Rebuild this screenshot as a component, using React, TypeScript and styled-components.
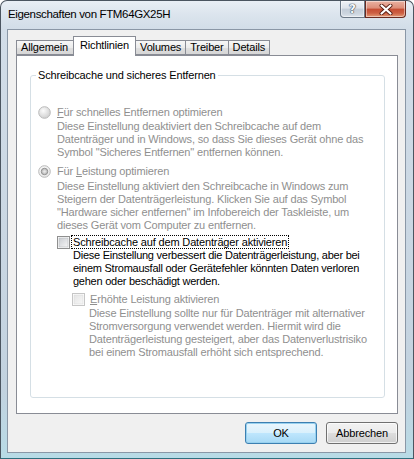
import React from "react";
import styled, { createGlobalStyle } from "styled-components";

const Global = createGlobalStyle`
  html, body { margin: 0; padding: 0; background: #ffffff; }
  body { font-family: "Liberation Sans", Arial, sans-serif; }
  * { box-sizing: border-box; }
`;

const Window = styled.div`
  width: 414px;
  height: 459px;
  display: flex;
  flex-direction: column;
  border: 1px solid #4b5560;
  border-bottom-color: #2f6f7e;
  border-radius: 7px 7px 0 0;
  background: linear-gradient(
    180deg,
    #e9eff5 0px,
    #dbe4ed 14px,
    #d2dde8 28px,
    #cad7e3 50%,
    #c2d2df 85%,
    #b8dbe6 100%
  );
  overflow: hidden;
`;

const TitleBar = styled.div`
  height: 28px;
  flex: none;
  display: flex;
  align-items: flex-start;
`;

const Title = styled.div`
  padding: 6px 0 0 7px;
  font-size: 11.5px;
  line-height: 14px;
  letter-spacing: -0.35px;
  color: #000;
`;

const CaptionButtons = styled.div`
  margin-left: auto;
  margin-right: 7px;
  display: flex;
`;

const CaptionButton = styled.div<{ $kind: "help" | "close" }>`
  height: 17px;
  width: ${(p) => (p.$kind === "help" ? 25 : 41)}px;
  display: flex;
  align-items: center;
  justify-content: center;
  border: 1px solid ${(p) => (p.$kind === "help" ? "#6b7886" : "#6a2a1f")};
  border-top: none;
  border-radius: ${(p) => (p.$kind === "help" ? "0 0 0 4px" : "0 0 4px 0")};
  background: ${(p) =>
    p.$kind === "help"
      ? "linear-gradient(180deg, #f0f3f7 0%, #dde3ea 45%, #c3cdd8 50%, #cdd6df 80%, #dfe6ee 100%)"
      : "linear-gradient(180deg, #eab2a2 0%, #dc8d78 45%, #c54d33 50%, #cc5f42 75%, #e39a76 100%)"};
  box-shadow: inset 0 0 0 1px rgba(255, 255, 255, 0.45);
`;

const HelpGlyph = styled.span`
  font-family: "DejaVu Sans", sans-serif;
  font-weight: bold;
  font-size: 12px;
  line-height: 12px;
  color: #f7f9fb;
  text-shadow: 0 0 1px #3b4754, 0 0 1px #3b4754, 0 0 1px #3b4754;
`;

const Client = styled.div`
  flex: 1;
  margin: 0 7px 5px 6px;
  border: 1px solid #8a97a6;
  background: #f0f0f0;
  display: flex;
  flex-direction: column;
  padding: 6px 7px 0 8px;
  font-size: 11px;
  letter-spacing: -0.15px;
`;

const TabStrip = styled.div`
  display: flex;
  align-items: flex-end;
  height: 19px;
  flex: none;
  position: relative;
  z-index: 1;
`;

const Tab = styled.div<{ $active?: boolean }>`
  height: ${(p) => (p.$active ? 20 : 15)}px;
  margin-bottom: ${(p) => (p.$active ? -1 : 0)}px;
  margin-left: -1px;
  padding: ${(p) => (p.$active ? "2px 6px 0" : "0 4px")};
  border: 1px solid #898c95;
  border-bottom: ${(p) => (p.$active ? "none" : "1px solid #898c95")};
  background: ${(p) =>
    p.$active
      ? "#ffffff"
      : "linear-gradient(180deg, #f7f7f7 0%, #ececec 50%, #e0e0e0 51%, #d6d6d6 100%)"};
  line-height: 13px;
  display: flex;
  align-items: ${(p) => (p.$active ? "flex-start" : "center")};
  color: #000;
  white-space: nowrap;
  z-index: ${(p) => (p.$active ? 2 : 1)};
  &:first-child { margin-left: 0; padding-right: 5px; }
`;

const Panel = styled.div`
  flex: 1;
  border: 1px solid #898c95;
  background: #ffffff;
  display: flex;
  flex-direction: column;
`;

const Group = styled.fieldset`
  flex: 1;
  margin: 13px 12px 15px 13px;
  padding: 0 0 0 7px;
  border: 1px solid #d5dfe5;
  border-radius: 3px;
  min-width: 0;
`;

const Legend = styled.legend`
  margin-left: -2px;
  padding: 0 2px;
  line-height: 13px;
  color: #000;
`;

const OptionRow = styled.div<{ $indent?: number; $gap?: number; $top?: number }>`
  display: flex;
  align-items: center;
  height: 14px;
  margin-left: ${(p) => p.$indent ?? 0}px;
  margin-top: ${(p) => p.$top ?? 0}px;
  gap: ${(p) => p.$gap ?? 4}px;
`;

const OptionLabel = styled.span<{ $disabled?: boolean; $focus?: boolean }>`
  color: ${(p) => (p.$disabled ? "#8f8f8f" : "#000")};
  line-height: 12px;
  padding: 0 1px;
  border: 1px dotted ${(p) => (p.$focus ? "#000" : "transparent")};
  white-space: nowrap;
`;

const Key = styled.span`
  text-decoration: underline;
`;

const Description = styled.div<{ $indent: number; $disabled?: boolean; $top?: number }>`
  margin-left: ${(p) => p.$indent}px;
  margin-top: ${(p) => p.$top ?? 1}px;
  color: ${(p) => (p.$disabled ? "#8f8f8f" : "#000")};
  letter-spacing: ${(p) => (p.$disabled ? "-0.15px" : "-0.25px")};
  line-height: 13px;
  white-space: nowrap;
`;

const ButtonRow = styled.div`
  flex: none;
  display: flex;
  justify-content: flex-end;
  gap: 9px;
  padding: 8px 0 8px;
`;

const PushButton = styled.button<{ $default?: boolean }>`
  width: 72px;
  height: 22px;
  font-family: "Liberation Sans", Arial, sans-serif;
  font-size: 11px;
  letter-spacing: -0.15px;
  color: #000;
  border-radius: 3px;
  border: 1px solid ${(p) => (p.$default ? "#3c7fb1" : "#707070")};
  background: ${(p) =>
    p.$default
      ? "linear-gradient(180deg, #eaf6fd 0%, #d9f0fc 50%, #bee6fd 51%, #a7d9f5 100%)"
      : "linear-gradient(180deg, #f2f2f2 0%, #ebebeb 50%, #dddddd 51%, #cfcfcf 100%)"};
  box-shadow: inset 0 0 0 1px ${(p) => (p.$default ? "#98d1ef" : "rgba(255,255,255,0.7)")};
  padding: 0;
`;

const Radio = ({ checked }: { checked?: boolean }) => (
  <svg width="13" height="13" viewBox="0 0 13 13">
    <defs>
      <radialGradient id={checked ? "rg2" : "rg1"} cx="40%" cy="35%" r="70%">
        <stop offset="0%" stopColor="#fbfbfb" />
        <stop offset="100%" stopColor={checked ? "#e6e6e6" : "#cdcdcd"} />
      </radialGradient>
    </defs>
    <circle cx="6.5" cy="6.5" r="5.8" fill={`url(#${checked ? "rg2" : "rg1"})`} stroke="#b9b9b9" strokeWidth="1" />
    {checked && (
      <>
        <circle cx="6.5" cy="6.5" r="3.2" fill="#c9c9c9" stroke="#8e8e8e" strokeWidth="1" />
        <circle cx="6.5" cy="6.5" r="1.3" fill="#e8e8e8" />
      </>
    )}
  </svg>
);

const Check = ({ disabled }: { disabled?: boolean }) => (
  <svg width="13" height="13" viewBox="0 0 13 13">
    <defs>
      <linearGradient id={disabled ? "cg2" : "cg1"} x1="0" y1="0" x2="1" y2="1">
        <stop offset="0%" stopColor={disabled ? "#e4e4e4" : "#c9ccd1"} />
        <stop offset="100%" stopColor={disabled ? "#f7f7f7" : "#f6f6f6"} />
      </linearGradient>
    </defs>
    <rect x="0.5" y="0.5" width="12" height="12" fill="#ffffff" stroke={disabled ? "#c6c6c6" : "#8f8f8f"} />
    <rect x="2" y="2" width="9" height="9" fill={`url(#${disabled ? "cg2" : "cg1"})`} stroke={disabled ? "#dadada" : "#b5b8bd"} strokeWidth="0.6" />
  </svg>
);

const CloseGlyph = () => (
  <svg width="14" height="11" viewBox="0 0 14 11">
    <path d="M2.5 1.5 L11.5 9.5 M11.5 1.5 L2.5 9.5" stroke="#5a1f14" strokeWidth="4" strokeLinecap="round" />
    <path d="M2.5 1.5 L11.5 9.5 M11.5 1.5 L2.5 9.5" stroke="#ffffff" strokeWidth="2.2" strokeLinecap="round" />
  </svg>
);

export default function App() {
  return (
    <>
      <Global />
      <Window>
        <TitleBar>
          <Title>Eigenschaften von FTM64GX25H</Title>
          <CaptionButtons>
            <CaptionButton $kind="help">
              <HelpGlyph>?</HelpGlyph>
            </CaptionButton>
            <CaptionButton $kind="close">
              <CloseGlyph />
            </CaptionButton>
          </CaptionButtons>
        </TitleBar>
        <Client>
          <TabStrip>
            <Tab>Allgemein</Tab>
            <Tab $active>Richtlinien</Tab>
            <Tab>Volumes</Tab>
            <Tab>Treiber</Tab>
            <Tab>Details</Tab>
          </TabStrip>
          <Panel>
            <Group>
              <Legend>Schreibcache und sicheres Entfernen</Legend>
              <OptionRow $top={23}>
                <Radio />
                <OptionLabel $disabled>
                  <Key>F</Key>ür schnelles Entfernen optimieren
                </OptionLabel>
              </OptionRow>
              <Description $indent={19} $disabled>
                Diese Einstellung deaktiviert den Schreibcache auf dem
                <br />
                Datenträger und in Windows, so dass Sie dieses Gerät ohne das
                <br />
                Symbol "Sicheres Entfernen" entfernen können.
              </Description>
              <OptionRow $top={5}>
                <Radio checked />
                <OptionLabel $disabled>
                  Für <Key>L</Key>eistung optimieren
                </OptionLabel>
              </OptionRow>
              <Description $indent={19} $disabled $top={2}>
                Diese Einstellung aktiviert den Schreibcache in Windows zum
                <br />
                Steigern der Datenträgerleistung. Klicken Sie auf das Symbol
                <br />
                "Hardware sicher entfernen" im Infobereich der Taskleiste, um
                <br />
                dieses Gerät vom Computer zu entfernen.
              </Description>
              <OptionRow $indent={19} $gap={1} $top={3}>
                <Check />
                <OptionLabel $focus>Schreibcache auf dem Datenträger aktivieren</OptionLabel>
              </OptionRow>
              <Description $indent={35} $top={0}>
                Diese Einstellung verbessert die Datenträgerleistung, aber bei
                <br />
                einem Stromausfall oder Gerätefehler könnten Daten verloren
                <br />
                gehen oder beschädigt werden.
              </Description>
              <OptionRow $indent={34} $gap={3} $top={4}>
                <Check disabled />
                <OptionLabel $disabled>
                  <Key>E</Key>rhöhte Leistung aktivieren
                </OptionLabel>
              </OptionRow>
              <Description $indent={51} $disabled $top={1}>
                Diese Einstellung sollte nur für Datenträger mit alternativer
                <br />
                Stromversorgung verwendet werden. Hiermit wird die
                <br />
                Datenträgerleistung gesteigert, aber das Datenverlustrisiko
                <br />
                bei einem Stromausfall erhöht sich entsprechend.
              </Description>
            </Group>
          </Panel>
          <ButtonRow>
            <PushButton $default>OK</PushButton>
            <PushButton>Abbrechen</PushButton>
          </ButtonRow>
        </Client>
      </Window>
    </>
  );
}
